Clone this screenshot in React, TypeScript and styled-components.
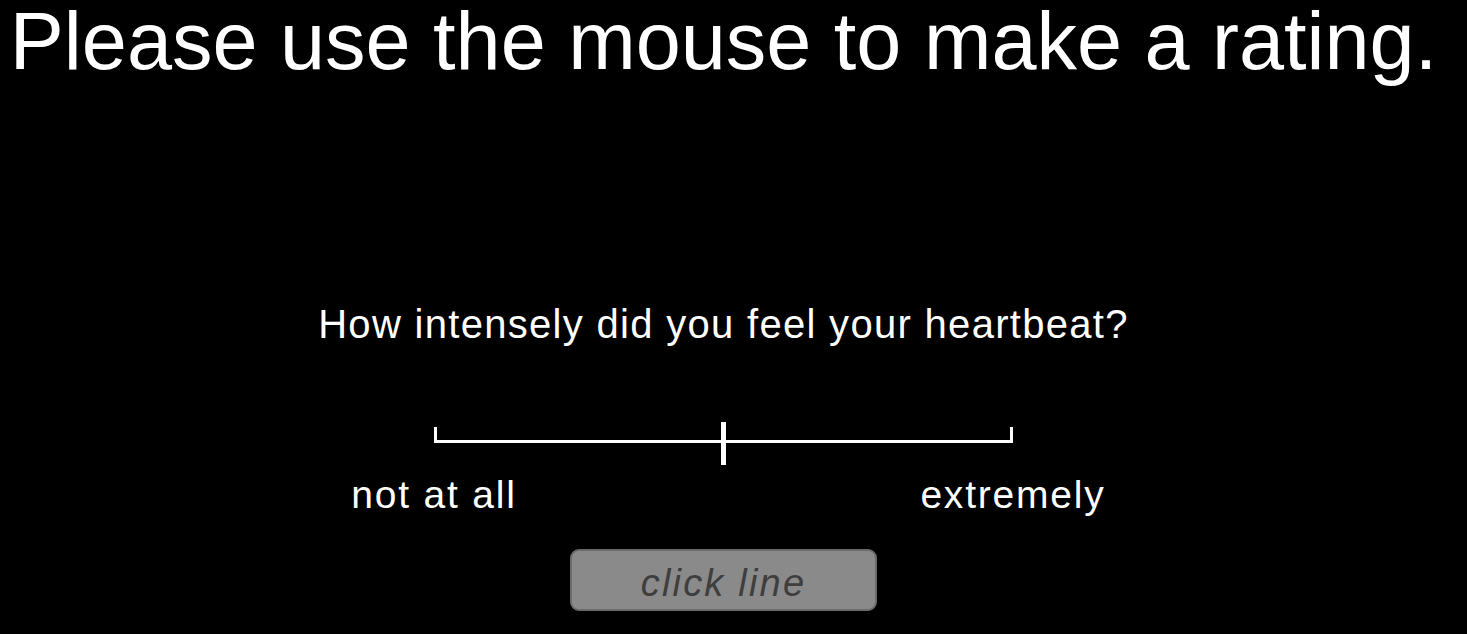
import styled, { createGlobalStyle } from "styled-components";

const GlobalStyle = createGlobalStyle`
  html, body {
    margin: 0;
    padding: 0;
    background: #000000;
  }
  body {
    font-family: "Liberation Sans", Arial, sans-serif;
    color: #ffffff;
  }
`;

const Page = styled.div`
  width: 1447px;
  min-height: 634px;
  display: flex;
  flex-direction: column;
  align-items: center;
`;

const Title = styled.h1`
  margin: -5px 0 0;
  font-size: 81px;
  font-weight: 400;
  line-height: 1.15;
  white-space: nowrap;
`;

const Question = styled.p`
  margin: 216px 0 0;
  font-size: 40px;
  letter-spacing: 1.3px;
  line-height: 1;
  white-space: nowrap;
`;

const Scale = styled.div`
  position: relative;
  width: 579px;
  height: 43px;
  margin-top: 78px;
  box-sizing: border-box;
  padding-top: 5px;
`;

const Track = styled.div`
  height: 13px;
  border: 3px solid #ffffff;
  border-top: none;
`;

const Marker = styled.div`
  position: absolute;
  top: 0;
  left: calc(50% - 2.5px);
  width: 5px;
  height: 43px;
  background: #ffffff;
`;

const Labels = styled.div`
  width: 579px;
  margin-top: 10px;
  display: flex;
  justify-content: space-between;
`;

const Anchor = styled.div`
  width: 0;
  display: flex;
  justify-content: center;
`;

const Label = styled.span`
  font-size: 39px;
  letter-spacing: 1.8px;
  line-height: 1;
  white-space: nowrap;
`;

const Button = styled.button`
  margin-top: 35px;
  width: 307px;
  height: 62px;
  box-sizing: border-box;
  padding: 6px 0 0;
  display: flex;
  align-items: center;
  justify-content: center;
  background: #8a8a8a;
  border: 2px solid #6b6b6b;
  border-radius: 9px;
  font-family: "Liberation Sans", Arial, sans-serif;
  font-size: 38px;
  font-style: italic;
  letter-spacing: 2.2px;
  line-height: 1;
  color: #3e3e3e;
`;

export default function App() {
  return (
    <>
      <GlobalStyle />
      <Page>
        <Title>Please use the mouse to make a rating.</Title>
        <Question>How intensely did you feel your heartbeat?</Question>
        <Scale>
          <Track />
          <Marker />
        </Scale>
        <Labels>
          <Anchor>
            <Label>not at all</Label>
          </Anchor>
          <Anchor>
            <Label>extremely</Label>
          </Anchor>
        </Labels>
        <Button>click line</Button>
      </Page>
    </>
  );
}
